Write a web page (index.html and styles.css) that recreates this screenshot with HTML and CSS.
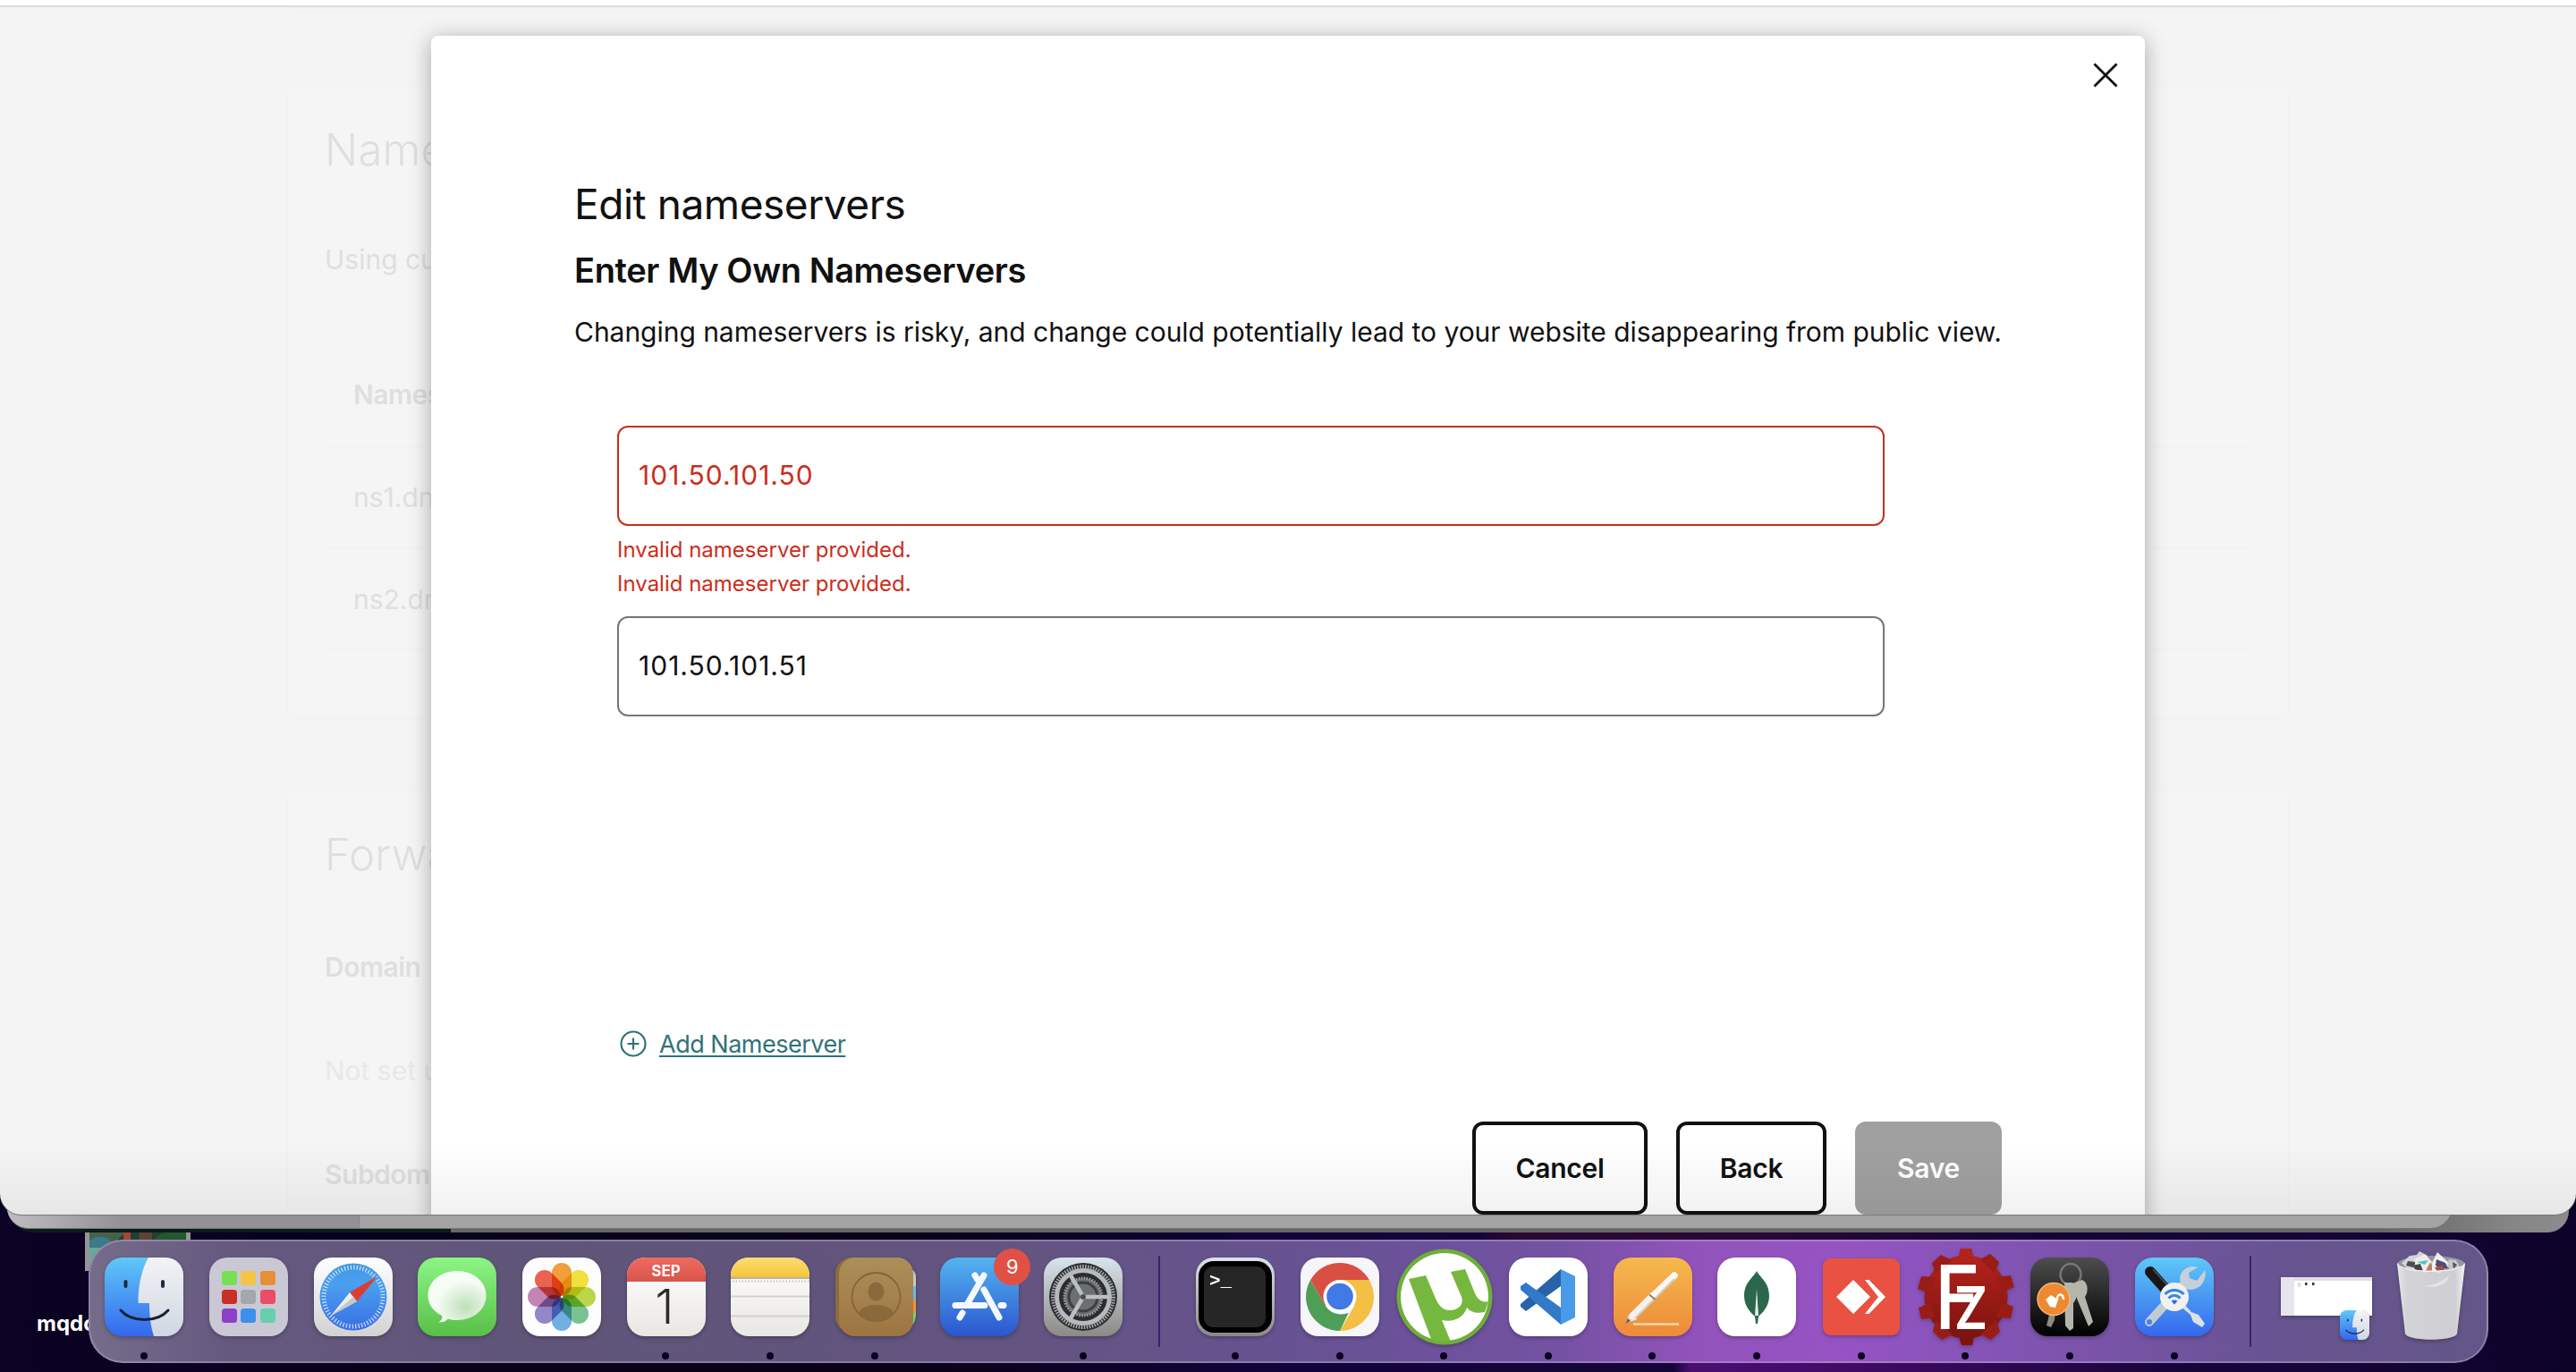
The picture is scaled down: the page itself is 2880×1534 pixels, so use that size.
FILE: index.html
```html
<!DOCTYPE html>
<html lang="en">
<head>
<meta charset="utf-8">
<title>Edit nameservers</title>
<link rel="stylesheet" href="styles.css">
</head>
<body>
<div class="desktop">
  <div class="desktop-file"><div class="thumb"><svg viewBox="0 0 108 42" width="108" height="42"><rect width="108" height="42" fill="#23402f"/><path d="M0 0h40L28 14H0z" fill="#47604a"/><path d="M0 10c8-6 18-6 26 2v30H0z" fill="#3a7a8a"/><path d="M0 18h30v24H0z" fill="#6aa79c"/><path d="M56 0h14v24H54z" fill="#5d4236"/><path d="M38 0h8v12h-8z" fill="#a5463a"/><path d="M74 6l12-6h22v30H70z" fill="#24562f"/></svg></div></div>
  <div class="desktop-label">mqdo</div>

  <div class="window window-back"></div>
  <div class="window window-mid"><div class="side"></div></div>

  <main class="window window-front">
    <div class="toolbar-edge"></div>
    <section class="card card-first"></section>
    <section class="card card-ns">
      <h2 class="bg-title">Name</h2>
      <p class="bg-text">Using cu</p>
      <div class="rows">
        <div class="row row-head strong">Names</div>
        <div class="row">ns1.dn</div>
        <div class="row">ns2.dn</div>
      </div>
    </section>
    <section class="card card-fwd">
      <h2 class="bg-title">Forwa</h2>
      <p class="bg-text bg-first strong">Domain</p>
      <p class="bg-text faint">Not set u</p>
      <p class="bg-text strong">Subdoma</p>
    </section>

    <div class="modal" role="dialog">
      <button class="close" aria-label="Close"><svg viewBox="0 0 28 28" width="28" height="28"><path d="M1.500 1.500l25 25M26.500 1.500l-25 25" stroke="#111" stroke-width="2.800" fill="none"/></svg></button>
      <h1 class="title">Edit nameservers</h1>
      <h2 class="subtitle">Enter My Own Nameservers</h2>
      <p class="lead">Changing nameservers is risky, and change could potentially lead to your website disappearing from public view.</p>
      <form class="form">
        <div class="input invalid">101.50.101.50</div>
        <div class="errors">
          <p class="error">Invalid nameserver provided.</p>
          <p class="error">Invalid nameserver provided.</p>
        </div>
        <div class="input">101.50.101.51</div>
        <a class="add"><svg viewBox="0 0 30 30" width="30" height="30"><circle cx="15" cy="15" r="13.500" fill="none" stroke="#2f7377" stroke-width="2.200"/><path d="M15 8.500v13M8.500 15h13" stroke="#2f7377" stroke-width="2.200"/></svg><span>Add Nameserver</span></a>
      </form>
      <div class="actions">
        <button class="btn cancel">Cancel</button>
        <button class="btn back">Back</button>
        <button class="btn save">Save</button>
      </div>
    </div>
    <div class="fade"></div>
  </main>

  <svg class="defs" width="0" height="0">
    <defs>
      <linearGradient id="blue" x2="0" y2="1"><stop stop-color="#5fc8f8"/><stop offset="1" stop-color="#3468ee"/></linearGradient>
      <linearGradient id="pale" x2="0" y2="1"><stop stop-color="#f3f3f6"/><stop offset="1" stop-color="#cfd7e2"/></linearGradient>
      <linearGradient id="green" x2="0" y2="1"><stop stop-color="#8cf584"/><stop offset="1" stop-color="#58bf49"/></linearGradient>
      <linearGradient id="whiteg" x2="0" y2="1"><stop stop-color="#fff"/><stop offset="1" stop-color="#d2d2d2"/></linearGradient>
      <linearGradient id="safari" x2="0" y2="1"><stop stop-color="#3f97e4"/><stop offset=".3" stop-color="#4ba0ee"/><stop offset="1" stop-color="#3a6fe4"/></linearGradient>
      <radialGradient id="bubble" cx=".65" cy=".7"><stop stop-color="#bfe0ba"/><stop offset="1" stop-color="#f5fcf4"/></radialGradient>
      <linearGradient id="red" x2="0" y2="1"><stop stop-color="#ef6a5f"/><stop offset="1" stop-color="#d8554b"/></linearGradient>
      <linearGradient id="yellow" x2="0" y2="1"><stop stop-color="#f9dd72"/><stop offset="1" stop-color="#f6c63a"/></linearGradient>
      <linearGradient id="paper" x2="0" y2="1"><stop stop-color="#fff"/><stop offset="1" stop-color="#e9e7e3"/></linearGradient>
      <linearGradient id="tan" x2="0" y2="1"><stop stop-color="#ac8f58"/><stop offset="1" stop-color="#9d7443"/></linearGradient>
      <linearGradient id="store" x2="0" y2="1"><stop stop-color="#54b4ef"/><stop offset="1" stop-color="#2a56cf"/></linearGradient>
      <linearGradient id="steel" x2="0" y2="1"><stop stop-color="#d9e4ec"/><stop offset="1" stop-color="#8b8985"/></linearGradient>
      <linearGradient id="orange" x2="0" y2="1"><stop stop-color="#f5b94d"/><stop offset="1" stop-color="#ee8a3a"/></linearGradient>
      <linearGradient id="fz" x2="0" y2="1"><stop stop-color="#b5231b"/><stop offset="1" stop-color="#7c130f"/></linearGradient>
      <linearGradient id="black" x2="0" y2="1"><stop stop-color="#4d4d4d"/><stop offset="1" stop-color="#000"/></linearGradient>
      <linearGradient id="bin"><stop stop-color="#e6e6ea"/><stop offset=".15" stop-color="#d3d2d6"/><stop offset=".85" stop-color="#cfced2"/><stop offset="1" stop-color="#f2f2f5"/></linearGradient>
      <clipPath id="tile"><rect width="88" height="88" rx="20"/></clipPath>
      <clipPath id="disc"><circle cx="54" cy="54" r="50"/></clipPath>
      <g id="finder"><g clip-path="url(#tile)"><rect width="88" height="88" fill="url(#blue)"/><path d="M49 0C40 16 37.500 34 37.500 51h12.500c0 14 1.500 26 5 37H88V0z" fill="url(#pale)"/></g><path d="M23.500 27v5M65 27v5" stroke="#1d2b3c" stroke-width="4" stroke-linecap="round"/><path d="M18 59c12 14 41 14 53 0" fill="none" stroke="#14233a" stroke-width="3" stroke-linecap="round"/></g>
    </defs>
  </svg>

  <nav class="dock">
    <div class="slot running"><svg class="icon" viewBox="0 0 88 88"><use href="#finder"/></svg></div>
    <div class="slot"><svg class="icon" viewBox="0 0 88 88"><rect width="88" height="88" rx="20" fill="#cbc8d5"/><g><rect x="14" y="15" width="17" height="16" rx="3.500" fill="#77e052"/><rect x="35" y="15" width="17" height="16" rx="3.500" fill="#f4c544"/><rect x="57" y="15" width="17" height="16" rx="3.500" fill="#e88f36"/><rect x="14" y="36" width="17" height="16" rx="3.500" fill="#c93025"/><rect x="35" y="36" width="17" height="16" rx="3.500" fill="#a3a8ac"/><rect x="57" y="36" width="17" height="16" rx="3.500" fill="#ea4d65"/><rect x="14" y="57" width="17" height="16" rx="3.500" fill="#8c40c8"/><rect x="35" y="57" width="17" height="16" rx="3.500" fill="#3b90ee"/><rect x="57" y="57" width="17" height="16" rx="3.500" fill="#66cfae"/></g></svg></div>
    <div class="slot"><svg class="icon" viewBox="0 0 88 88"><rect width="88" height="88" rx="20" fill="url(#whiteg)"/><circle cx="44" cy="44" r="37.500" fill="url(#safari)"/><circle cx="44" cy="44" r="33" fill="none" stroke="#cfe4fa" stroke-width="5" stroke-dasharray="1.200 2.256"/><path d="M71 21L40 39l8 10z" fill="#dd3d30"/><path d="M19 65l21-26 8 10z" fill="#eceef0"/><path d="M19 65l25-21 4 5z" fill="#c3c8cc"/></svg></div>
    <div class="slot"><svg class="icon" viewBox="0 0 88 88"><rect width="88" height="88" rx="20" fill="url(#green)"/><path d="M44 15c18 0 32.500 11.500 32.500 27.500S62 70 44 70c-4 0-7-.5-10-1.500-3 3-6 4-10.500 4 3-2 4.500-5 3.500-7.500C17 60 11.500 52 11.500 42.500 11.500 26.500 26 15 44 15z" fill="url(#bubble)"/></svg></div>
    <div class="slot"><svg class="icon" viewBox="0 0 88 88"><rect width="88" height="88" rx="20" fill="#fdfdfe"/><g class="petals"><rect x="33" y="6" width="22" height="37" rx="11" fill="#f2a03a"/><rect x="33" y="6" width="22" height="37" rx="11" fill="#f2e13c" transform="rotate(45 44 44)"/><rect x="33" y="6" width="22" height="37" rx="11" fill="#bcd84b" transform="rotate(90 44 44)"/><rect x="33" y="6" width="22" height="37" rx="11" fill="#7bc495" transform="rotate(135 44 44)"/><rect x="33" y="6" width="22" height="37" rx="11" fill="#72b1e4" transform="rotate(180 44 44)"/><rect x="33" y="6" width="22" height="37" rx="11" fill="#9189c8" transform="rotate(225 44 44)"/><rect x="33" y="6" width="22" height="37" rx="11" fill="#c586b4" transform="rotate(270 44 44)"/><rect x="33" y="6" width="22" height="37" rx="11" fill="#ec6450" transform="rotate(315 44 44)"/></g></svg></div>
    <div class="slot running"><svg class="icon" viewBox="0 0 88 88"><g clip-path="url(#tile)"><rect width="88" height="88" fill="url(#paper)"/><rect width="88" height="27" fill="url(#red)"/></g><text x="43.500" y="21" class="cal-month">SEP</text><text x="42" y="74" class="cal-day">1</text></svg></div>
    <div class="slot running"><svg class="icon" viewBox="0 0 88 88"><g clip-path="url(#tile)"><rect width="88" height="88" fill="url(#paper)"/><rect width="88" height="22" fill="url(#yellow)"/><path d="M0 23h88" stroke="#a39a83" stroke-width="1.500"/><path d="M2 26.500h86" stroke="#c4c3c0" stroke-width="2" stroke-dasharray="1.500 2"/><path d="M0 43.500h88M0 65.500h88" stroke="#d2d1d0" stroke-width="2"/></g></svg></div>
    <div class="slot running"><svg class="icon" viewBox="0 0 88 88"><path d="M82 13c6 0 8 5 8 9v10h-8z" fill="#c9c6c0"/><path d="M82 32h8v15h-8z" fill="#63b9ec"/><path d="M82 47h8v15h-8z" fill="#ee9238"/><path d="M82 62h8c0 9-3 14-8 16z" fill="#70d66b"/><rect width="84" height="84" rx="18" fill="#8c6c3c"/><rect x="4" width="83" height="88" rx="18" fill="url(#tan)"/><circle cx="45.500" cy="44" r="27" fill="none" stroke="#866535" stroke-width="1.800"/><ellipse cx="45.500" cy="38" rx="9" ry="10.500" fill="#8a693a"/><path d="M26 62c6-12 33-12 39 0-8 12-31 12-39 0z" fill="#8a693a"/></svg></div>
    <div class="slot"><svg class="icon" viewBox="0 0 88 88"><rect width="88" height="88" rx="20" fill="url(#store)"/><g fill="none" stroke="#f5f9fd" stroke-width="7" stroke-linecap="round"><path d="M17 53.500h33M68 53.500h3"/><path d="M49 20L31 51M25 62l-3 5"/><path d="M39 20l3 5M49 36l17 31"/></g></svg><span class="badge">9</span></div>
    <div class="slot running"><svg class="icon" viewBox="0 0 88 88"><rect width="88" height="88" rx="20" fill="url(#steel)"/><circle cx="44" cy="44" r="38" fill="#2b2d2e"/><circle cx="44" cy="44" r="34" fill="none" stroke="#a3a8aa" stroke-width="4" stroke-dasharray="1.600 1.400"/><circle cx="44" cy="44" r="29.500" fill="none" stroke="#b4babd" stroke-width="5"/><circle cx="44" cy="44" r="21" fill="#6c6f70" stroke="#9a9fa2" stroke-width="3" stroke-dasharray="1.600 1.400"/><circle cx="44" cy="44" r="16" fill="none" stroke="#3c3f40" stroke-width="3"/><path d="M44 44h28M44 44L30 20M44 44L30 68" stroke="#b9bfc2" stroke-width="4.500"/><circle cx="44" cy="44" r="3" fill="#4c4e50"/></svg></div>
    <div class="divider"></div>
    <div class="slot running"><svg class="icon" viewBox="0 0 88 88"><rect width="88" height="88" rx="20" fill="url(#steel)"/><rect x="3" y="4" width="82" height="80" rx="17" fill="#000"/><rect x="9" y="10" width="69" height="68" rx="10" fill="#262626"/><text x="15" y="32" class="prompt">&gt;_</text></svg></div>
    <div class="slot running"><svg class="icon" viewBox="0 0 88 88"><rect width="88" height="88" rx="20" fill="#f6f5fa"/><path d="M44 44L11.100 25A38 38 0 0 1 76.900 25z" fill="#d94f41"/><path d="M44 25h32.900A38 38 0 0 1 44 82l16.500-28.500z" fill="#f3bf45"/><path d="M44 82A38 38 0 0 1 11.100 25l16.500 28.500c5 9 16 12 26 8.500z" fill="#4e9e55"/><path d="M11.100 25l16.500 28.500L44 44V25z" fill="#d94f41"/><circle cx="44" cy="43.500" r="18.500" fill="#fff"/><circle cx="44" cy="43.500" r="14.800" fill="#4179e6"/></svg></div>
    <div class="slot running"><svg class="icon icon-large" viewBox="0 0 108 108"><circle cx="54" cy="54" r="53.500" fill="#6faf38"/><circle cx="54" cy="54" r="49" fill="#fff"/><path clip-path="url(#disc)" fill="#76b83f" d="M14 34l19-4 12 28c4 8 9 11 15 11 9 0 16-6 13-15L61 26l16-3 11 27c3 7 8 11 15 9l-4 12c-9 2-16 0-20-5-3 10-13 17-28 14l10 24-19 5z"/></svg></div>
    <div class="slot running"><svg class="icon" viewBox="0 0 88 88"><rect width="88" height="88" rx="20" fill="#fff"/><path d="M58 13v19L19 60l-6-5v-3z" fill="#2763a8"/><path d="M19 28l39 28v19L13 36v-4z" fill="#3279ca"/><path d="M58 13l16 8v46l-16 8z" fill="#4a9aea"/></svg></div>
    <div class="slot running"><svg class="icon" viewBox="0 0 88 88"><rect width="88" height="88" rx="20" fill="url(#orange)"/><path d="M22 74.500h51" stroke="#fbd9a6" stroke-width="2.600"/><path d="M14 73.500l3-10 9-2 0 8z" fill="#e3ddd6"/><path d="M22 65l22-22" stroke="#f5f1ec" stroke-width="8.500" stroke-linecap="round"/><path d="M44 43l24-23" stroke="#faf7f4" stroke-width="7.500" stroke-linecap="round"/><path d="M24 68l44-44" stroke="#d6c8bc" stroke-width="2"/><path d="M40 41.500l6.500 5.500" stroke="#8b7c6b" stroke-width="1.800"/><path d="M13.500 74l2.500-6 3 3z" fill="#6d5b4d"/></svg></div>
    <div class="slot running"><svg class="icon" viewBox="0 0 88 88"><rect width="88" height="88" rx="20" fill="#fff"/><path d="M44 15c3 7 14 12 14 28 0 12-8 19-12 23l-1 8h-2l-1-8c-4-4-12-11-12-23 0-16 11-21 14-28z" fill="#2b674c"/><path d="M44 35l2 30h-4z" fill="#e7eee9"/></svg></div>
    <div class="slot running"><svg class="icon" viewBox="0 0 88 88"><rect x="1" y="1" width="86" height="86" rx="9" fill="#e95142"/><path d="M35 25l19 19-19 19-19-19z" fill="#fff"/><path d="M48 25h4.500L71 44 52.500 63H48l15-19z" fill="#fff"/></svg></div>
    <div class="slot running"><svg class="icon icon-large" viewBox="0 0 108 108"><circle cx="54" cy="54" r="46.500" fill="url(#fz)"/><path d="M46 10l2-10h12l2 10zM46 98l3 10h12l2-10zM70 12l11-6 10 9-5 13zM20 28l-4-12 10-9 12 6zM88 32l16-2 4 13-13 5zM94 60l13 5-3 13-16-1zM20 32L4 31 0 45l13 5zM13 61L1 66l3 13 16-2zM88 80l4 13-10 9-12-6zM20 80l-3 13 10 9 12-6z" fill="#9a1c16"/><path d="M48 0h12l2 10H46z" fill="#b3231b"/><path d="M46 98h17l-2 10H49z" fill="#7e1410"/><text transform="translate(19 90) scale(.87 1)" class="fz-mark">F<tspan x="25" class="fz-z">Z</tspan></text></svg></div>
    <div class="slot running"><svg class="icon" viewBox="0 0 88 88"><rect width="88" height="88" rx="20" fill="url(#black)"/><ellipse cx="45" cy="19" rx="11.500" ry="12" fill="none" stroke="#77766f" stroke-width="2.500"/><g fill="#b5b5ac"><path d="M47 29l11-4c7 3 7 14 3 19l9 28-5 5-15-36z"/><path d="M38 28h9c7 5 6 18 1 23v28l-4 3-5-6z"/></g><path d="M22 60l6-2-1 12-4 8-5-2z" fill="#8d8a80"/><circle cx="26" cy="46.500" r="18" fill="#ee8932" stroke="#f1b981" stroke-width="1.500"/><path d="M17 47l6-5 8 5-3 9-6-1z" fill="#fff"/><path d="M30 48c-1-8 7-9 7-1" fill="none" stroke="#fff" stroke-width="2.500"/></svg></div>
    <div class="slot running"><svg class="icon" viewBox="0 0 88 88"><rect width="88" height="88" rx="20" fill="url(#blue)"/><path d="M17 16l23 26" stroke="#171717" stroke-width="12" stroke-linecap="round"/><path d="M20 13l24 27" stroke="#555" stroke-width="1.500"/><path d="M50 54l4-3 9 10 8 3 7 10-3 4-10-6-3-8z" fill="#dbe2e9"/><path d="M16 72l38-42" stroke="#c2cbd4" stroke-width="10" stroke-linecap="round"/><path d="M70 11c-11-4-23 6-19 17 3 11 19 10 25 0 3-5 3-10 2-14l-9 12-8-3-1-6z" fill="#c6d0da"/><circle cx="16" cy="72" r="3" fill="#4a7ff0"/><circle cx="44" cy="44" r="16" fill="#f1f1f1"/><g fill="none" stroke="#2f86e6" stroke-width="3"><path d="M33.500 41c6-6 15-6 21 0"/><path d="M37.500 45.500c4-4 9-4 13 0"/></g><path d="M40.500 48.500q3.500-2 7 0L44 52.500z" fill="#2669df"/></svg></div>
    <div class="divider"></div>
    <div class="slot"><svg class="icon wide" viewBox="0 0 108 88"><rect x="3" y="22" width="102" height="43" fill="#fff"/><rect x="3" y="22" width="102" height="4" fill="#e1dde6"/><rect x="3" y="22" width="15" height="43" fill="#e8e4ee"/><path d="M22 28h3v5h-3z" fill="#ddd"/><path d="M30 28h2.500v3H30zM38 28h2.500v3H38z" fill="#333"/><use href="#finder" transform="translate(69 59) scale(.375)"/></svg></div>
    <div class="slot"><svg class="icon bin" viewBox="0 0 78 100"><path d="M1 14c2-7 74-7 76 0l-9 78c-2 9-56 9-58 0z" fill="url(#bin)"/><ellipse cx="39" cy="14" rx="37.500" ry="9" fill="#9694a4"/><g><path d="M6 13l9-8 8-1 3-4 9 5-2 9-9 8-12-3z" fill="#d5d5d5"/><path d="M13 11l9 1-3 6-8-2z" fill="#4d4d52"/><path d="M20 9l12-6 8 9-6 12-11-4z" fill="#ededed"/><path d="M18 16l9-2 3 8-8-1z" fill="#4a4648"/><path d="M23 12l13-2-4 5z" fill="#4ec4c0"/><path d="M33 22l5-10 2 10z" fill="#c9794d"/><path d="M40 13l6-12 15 14-12 9-9-2z" fill="#f0f0f0"/><path d="M45 9l10 4 3 6-8 1-6-4z" fill="#504a76"/><path d="M43 18l9-2 2 5-8 2z" fill="#a0563e"/><path d="M59 9l8 1 5 9-11 3-4-7z" fill="#c8c8c8"/><path d="M63 12l5 3-4 5z" fill="#55565c"/></g><path d="M1.500 14c4 11 71 11 75 0" fill="none" stroke="#efeff2" stroke-width="1.500"/><path d="M30 38c10 1 20-3 29-11-1 10-15 16-29 11z" fill="#e4e4e6"/></svg></div>
  </nav>
</div>
</body>
</html>
```
FILE: styles.css
```css
* { box-sizing: border-box; }
body { margin: 0; font-family: Inter, "Liberation Sans", sans-serif; color: #111; }
h1, h2, p { margin: 0; font-weight: 400; }
button { font: inherit; }

.desktop {
  position: relative;
  width: 2880px;
  height: 1534px;
  overflow: hidden;
  background:
    linear-gradient(90deg, rgba(40, 8, 52, 0) 1650px, #2a0836 1690px, #2a0836 1950px, rgba(40, 8, 52, 0) 2300px) 0 0 / 100% 1390px no-repeat,
    linear-gradient(90deg, rgba(74, 14, 112, 0) 1870px, #4a0e70 1890px, #430b66 2050px, rgba(50, 10, 90, 0) 2450px) 0 1400px / 100% 134px no-repeat,
    linear-gradient(90deg, #0c0224 0%, #07011a 18%, #090219 35%, #12033a 50%, #14043a 62%, #150538 90%, #0d0228 100%);
}
.defs { position: absolute; }

.desktop-file {
  position: absolute;
  left: 95px;
  top: 1340px;
  width: 118px;
  height: 81px;
  padding: 37px 5px 0;
  background: #969696;
}
.thumb { display: flex; }
.desktop-label {
  position: absolute;
  left: 41px;
  top: 1464px;
  font-size: 24px;
  font-weight: 700;
  line-height: 32px;
  color: #fff;
}

.window { position: absolute; overflow: hidden; }
.window-back {
  left: 12px; top: 1300px; width: 2860px; height: 78px;
  border-radius: 0 0 24px 24px;
  background: linear-gradient(90deg, #0d1a1c 492px, #666866 492px, #666866 2650px, #858685 2800px, #8b8c8b);
}
.window-mid {
  left: 8px; top: 1300px; width: 2733px; height: 74px;
  border-radius: 0 0 24px 24px;
  background: #a4a4a4;
  border-bottom: 1px solid #777;
}
.side { width: 394px; height: 100%; background: linear-gradient(90deg, #bdbdc0, #929295 130px); border-right: 1px solid #858585; }

.window-front {
  left: 0; top: 0; width: 2880px; height: 1358px;
  border-radius: 0 0 24px 24px;
  background: #f4f4f4;
  box-shadow: 0 1px 1px #777;
}
.toolbar-edge { height: 8px; background: #fff; border-bottom: 2px solid #dcdcdc; }
.card {
  width: 2238px;
  margin: 0 0 82px 321px;
  padding: 41px 41px 0;
  background: #f5f5f5;
  border: 1px solid #f1f1f1;
  border-radius: 8px;
  color: #dfdfdf;
}
.card-first { height: 6px; padding: 0; border-radius: 0 0 8px 8px; }
.card-ns { height: 706px; }
.card-fwd { height: 520px; }
.bg-title { font-size: 49px; font-weight: 300; line-height: 60px; letter-spacing: .2px; }
.bg-text { margin-top: 68px; font-size: 30px; line-height: 48px; }
.bg-first { margin-top: 71px; }
.strong { font-weight: 600; letter-spacing: -.5px; }
.faint { color: #e8e8e8; }
.rows { margin-top: 72px; }
.row { height: 114px; padding-left: 32px; border-bottom: 2px solid #f2f2f2; font-size: 30px; line-height: 112px; }
.row-head { line-height: 110px; }

.modal {
  position: absolute;
  left: 482px; top: 40px; width: 1916px; height: 1400px;
  padding: 158px 160px 0;
  background: #fff;
  border-radius: 8px;
  box-shadow: 0 4px 24px rgba(0, 0, 0, .32);
}
.close { position: absolute; right: 30px; top: 30px; padding: 0; border: 0; background: none; display: flex; }
.title { font-size: 46px; line-height: 60px; letter-spacing: -.45px; }
.subtitle { margin-top: 20px; font-size: 38px; font-weight: 600; line-height: 48px; letter-spacing: -.38px; }
.lead { margin-top: 21px; font-size: 30px; line-height: 48px; letter-spacing: -.03px; white-space: nowrap; }
.form { margin: 81px 0 0 48px; width: 1417px; }
.input {
  height: 112px;
  padding: 0 22px;
  border: 2px solid #767676;
  border-radius: 12px;
  font-size: 30px;
  letter-spacing: 1px;
  line-height: 106px;
}
.invalid { border-color: #cc2d1b; color: #cc2d1b; }
.errors { margin: 8px 0 17px; color: #cc2d1b; }
.error { font-size: 24px; line-height: 38px; }
.add { display: flex; align-items: center; gap: 14px; margin: 346px 0 0 3px; height: 40px; color: #2f7377; font-size: 27px; letter-spacing: -.5px; }
.add span { text-decoration: underline; text-decoration-thickness: 2px; text-underline-offset: 3px; }
.actions { display: flex; justify-content: flex-end; gap: 32px; margin-top: 67px; }
.btn { height: 104px; padding: 0; border: 4px solid #111; border-radius: 12px; background: none; color: #111; font-size: 30px; font-weight: 600; letter-spacing: -.3px; }
.cancel { width: 196px; }
.back { width: 168px; }
.save { width: 164px; border: 0; background: #a0a0a0; color: #fff; }
.fade { position: absolute; left: 0; right: 0; bottom: 0; height: 80px; background: linear-gradient(rgba(0, 0, 0, 0), rgba(0, 0, 0, .055)); }

.dock {
  position: absolute;
  left: 99px; top: 1386px; width: 2683px; height: 138px;
  display: flex;
  padding-left: 2px;
  border: 2px solid rgba(190, 175, 215, .45);
  border-radius: 38px;
  background: linear-gradient(90deg, #756c8a 0, #665980 150px, #5f5578 500px, #635480 1050px, #685295 1400px, #7352a2 1640px, #9253bb 1800px, #9653c3 1950px, #8654b8 2100px, #7953a8 2250px, #665490 2450px, #645688 100%);
}
.slot { position: relative; flex: 0 0 116.670px; display: flex; justify-content: center; align-items: flex-start; padding-top: 18px; }
.running::after { content: ""; position: absolute; left: 54px; bottom: 2px; width: 8px; height: 8px; border-radius: 50%; background: #0a0120; }
.icon { width: 88px; height: 88px; overflow: visible; filter: drop-shadow(0 2px 2px rgba(0, 0, 0, .25)); }
.icon-large { width: 108px; height: 108px; margin-top: -10px; flex: none; }
.wide { width: 108px; }
.bin { width: 78px; height: 100px; margin-top: -7px; }
.divider { flex: 0 0 53.300px; height: 102px; margin-top: 16px; background: linear-gradient(#372367, #372367) center / 2px 100% no-repeat; }
.badge { position: absolute; left: 75px; top: 8px; width: 41px; height: 41px; border-radius: 50%; background: #e15045; color: #fff; font-size: 22px; line-height: 41px; text-align: center; }
.petals rect { mix-blend-mode: multiply; }
.cal-month { font: 700 17px Inter, sans-serif; fill: #fff; text-anchor: middle; }
.cal-day { font: 300 53px Inter, sans-serif; fill: #2b2b2b; text-anchor: middle; }
.prompt { font: 700 21px "Liberation Mono", monospace; fill: #fff; }
.fz-mark { font: 500 99px Inter, sans-serif; fill: #fff; }
.fz-z { font-size: 66px; font-weight: 600; }
```
